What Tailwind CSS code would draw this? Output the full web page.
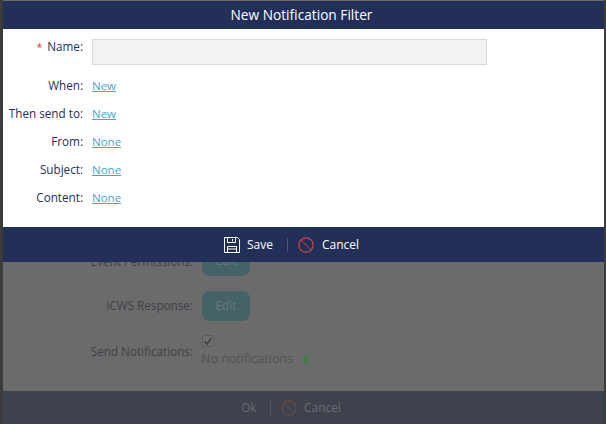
<!DOCTYPE html>
<html>
<head>
<meta charset="utf-8">
<script src="https://cdn.jsdelivr.net/npm/@tailwindcss/browser@4"></script>
</head>
<body class="m-0 overflow-hidden bg-[#3c3c3c]">
<div class="relative w-[606px] h-[424px] overflow-hidden font-['Open_Sans',sans-serif] text-[11.700px] pl-[3px] pr-[3px]">
  <!-- dimmed window below -->
  <div class="flex flex-col h-[424px] w-[601px] bg-[#6b6b6b]">
    <div class="h-[391px] pt-[246px] text-[#3f4148]">
      <div class="flex h-[30px] gap-[9px]">
        <div class="w-[190px] text-right pt-[7px]">Event Permissions:</div>
        <div class="w-[48px] h-[30px] rounded-[8px] bg-[#456266] text-[#66797c] flex items-center justify-center">Edit</div>
      </div>
      <div class="flex items-center h-[30px] gap-[9px] mt-[15px]">
        <div class="w-[190px] text-right">ICWS Response:</div>
        <div class="w-[48px] h-[30px] rounded-[8px] bg-[#456266] text-[#66797c] flex items-center justify-center">Edit</div>
      </div>
      <div class="flex items-center gap-[9px] mt-[14px]">
        <div class="w-[190px] text-right">Send Notifications:</div>
        <div class="flex flex-col">
          <div class="w-[12px] h-[12px] rounded-[2px] border border-[#5c5c5c] bg-[#6f6f6f] flex items-center justify-center">
            <svg width="10" height="10" viewBox="0 0 10 10"><path d="M1.500 5.500L4 8L8.500 2" fill="none" stroke="#444" stroke-width="2"/></svg>
          </div>
          <div class="flex items-center mt-[3px] -ml-[1px] text-[12.500px] text-[#505257]">No notifications
            <svg class="ml-[9px] mt-[2px]" width="8" height="8" viewBox="0 0 7 7"><path d="M2.500 0h2v2.500H7v2H4.500V7h-2V4.500H0v-2h2.500z" fill="#3f7d3f"/></svg>
          </div>
        </div>
      </div>
    </div>
    <div class="h-[33px] bg-[#3e424d] flex items-center text-[12px] text-[#6a6d72]">
      <div class="ml-[238px] w-[16px]">Ok</div>
      <div class="ml-[13px] w-px h-[14px] bg-[#54575f]"></div>
      <svg class="ml-[10px]" width="16" height="16" viewBox="0 0 16 16"><circle cx="8" cy="8" r="7.200" fill="none" stroke="#6d4a45" stroke-width="1.200"/><path d="M3 3l10 10" stroke="#6d4a45" stroke-width="1"/></svg>
      <div class="ml-[7px]">Cancel</div>
    </div>
  </div>
  <!-- modal on top -->
  <div class="absolute left-[3px] top-[1px] w-[601px] h-[261px] flex flex-col bg-white">
    <div class="h-[28px] pr-[4px] bg-[#212f59] text-white text-[13.700px] flex items-center justify-center">New Notification Filter</div>
    <div class="flex-1 relative pt-[10px] text-[#212f59]">
      <div class="flex h-[26px] gap-[9px]">
        <div class="w-[80px] text-right leading-[14px]"><span class="text-[#f03030] text-[10px] mr-[5px]">*</span>Name:</div>
        <div class="w-[395px] h-[26px] bg-[#f3f2f3] border border-[#d9d9d9]"></div>
      </div>
      <div class="flex h-[16px] mt-[13px] gap-[9px] items-center"><div class="w-[80px] text-right">When:</div><a class="text-[11.500px] text-[#45a7d0] underline">New</a></div>
      <div class="flex h-[16px] mt-[12px] gap-[9px] items-center"><div class="w-[80px] text-right whitespace-nowrap">Then send to:</div><a class="text-[11.500px] text-[#45a7d0] underline">New</a></div>
      <div class="flex h-[16px] mt-[12px] gap-[9px] items-center"><div class="w-[80px] text-right">From:</div><a class="text-[11.500px] text-[#45a7d0] underline">None</a></div>
      <div class="flex h-[16px] mt-[12px] gap-[9px] items-center"><div class="w-[80px] text-right">Subject:</div><a class="text-[11.500px] text-[#45a7d0] underline">None</a></div>
      <div class="flex h-[16px] mt-[12px] gap-[9px] items-center"><div class="w-[80px] text-right">Content:</div><a class="text-[11.500px] text-[#45a7d0] underline">None</a></div>
    </div>
    <div class="h-[35px] bg-[#212f59] flex items-center text-[12px] text-white">
      <svg class="ml-[221px]" width="16" height="16" viewBox="0 0 16 16" fill="none" stroke="#fff"><path d="M.5.5h13l2 2v13H.5z"/><path d="M3.500.5v5h8v-5M8.500 2v2.500M3.500 15.500v-6h9v6M3.500 12h9"/></svg>
      <div class="ml-[7px] w-[26px]">Save</div>
      <div class="ml-[14px] w-px h-[14px] bg-[#4a5678]"></div>
      <svg class="ml-[10px]" width="16" height="16" viewBox="0 0 16 16"><circle cx="8" cy="8" r="7.200" fill="none" stroke="#d0483c" stroke-width="1.200"/><path d="M3 3l10 10" stroke="#d0483c" stroke-width="1"/></svg>
      <div class="ml-[8px]">Cancel</div>
    </div>
  </div>
</div>
</body>
</html>
